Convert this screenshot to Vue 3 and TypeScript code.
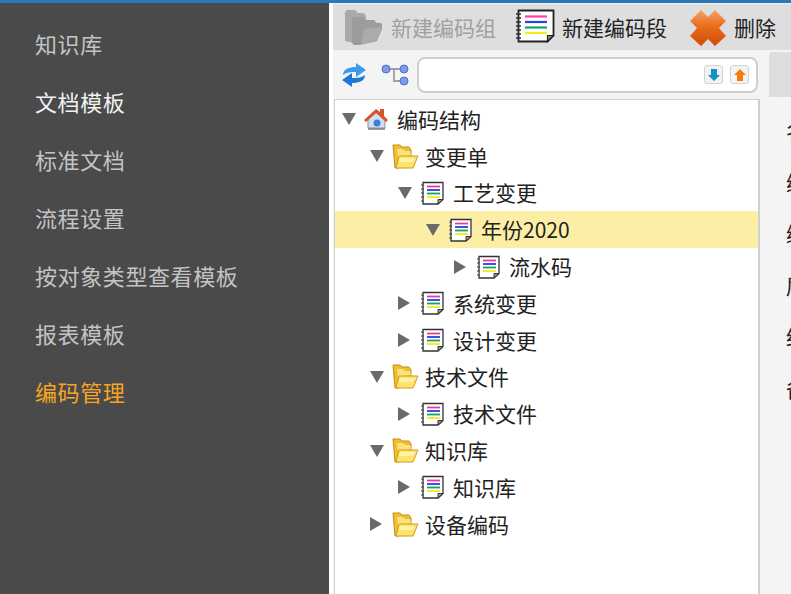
<script setup lang="ts">
interface NavItem { label: string; state: string }
interface TreeRow { label: string; level: number; open: boolean; icon: string; selected?: boolean }

const navItems: NavItem[] = [
  { label: '知识库', state: '' },
  { label: '文档模板', state: 'bright' },
  { label: '标准文档', state: '' },
  { label: '流程设置', state: '' },
  { label: '按对象类型查看模板', state: '' },
  { label: '报表模板', state: '' },
  { label: '编码管理', state: 'active' },
]

const rows: TreeRow[] = [
  { label: '编码结构', level: 0, open: true, icon: 'home' },
  { label: '变更单', level: 1, open: true, icon: 'folder' },
  { label: '工艺变更', level: 2, open: true, icon: 'note' },
  { label: '年份2020', level: 3, open: true, icon: 'note', selected: true },
  { label: '流水码', level: 4, open: false, icon: 'note' },
  { label: '系统变更', level: 2, open: false, icon: 'note' },
  { label: '设计变更', level: 2, open: false, icon: 'note' },
  { label: '技术文件', level: 1, open: true, icon: 'folder' },
  { label: '技术文件', level: 2, open: false, icon: 'note' },
  { label: '知识库', level: 1, open: true, icon: 'folder' },
  { label: '知识库', level: 2, open: false, icon: 'note' },
  { label: '设备编码', level: 1, open: false, icon: 'folder' },
]

const formLabels = ['名', '编', '编', '层', '结', '备']
</script>

<template>
  <div class="app">
    <div class="topline"></div>
    <div class="body">
      <nav class="side">
        <div v-for="n in navItems" :key="n.label" class="nav" :class="n.state">{{ n.label }}</div>
      </nav>
      <main class="main">
        <div class="toolbar">
          <div class="tool disabled g1">
            <svg width="40" height="38" viewBox="0 0 40 38">
              <path d="M1 3l2-2h8l3 3h6l2 3v23l-13 4-8-2z" fill="#a9a9a9" />
              <path d="M8 10l2-2h9l3 3h8l3 3h4l1 1v5l-5 12-17 4-6 0-2-2z" fill="#9c9c9c" />
              <path d="M20 20l18-2-5 13-16 4z" fill="#ababab" />
            </svg>
            <span>新建编码组</span>
          </div>
          <div class="tool g2">
            <svg class="big-note" width="40" height="36" viewBox="0 0 40 36">
              <path d="M3.500 2.500h35v25l-6 6h-29z" fill="#fff" stroke="#222" stroke-width="1.800" />
              <path d="M32.500 33.500v-6h6z" fill="#888" stroke="#222" stroke-width="1.200" />
              <path d="M1 6h5M1 10h5M1 14h5M1 18h5M1 22h5M1 26h5M1 30h5" stroke="#333" stroke-width="1.500" />
              <path d="M10 8.500h22" stroke="#ff3fa6" stroke-width="2.200" />
              <path d="M10 14h22" stroke="#2b3df0" stroke-width="2.200" />
              <path d="M10 19.500h22" stroke="#12a75a" stroke-width="2.200" />
              <path d="M10 25h22" stroke="#f7ec1e" stroke-width="2.200" />
            </svg>
            <span>新建编码段</span>
          </div>
          <div class="tool g3">
            <svg width="38" height="38" viewBox="0 0 38 38">
              <defs>
                <linearGradient id="xfill" x1="0" y1="0" x2="0" y2="1">
                  <stop offset="0" stop-color="#f4a468" />
                  <stop offset="0.45" stop-color="#e86c1c" />
                  <stop offset="1" stop-color="#cf4c06" />
                </linearGradient>
              </defs>
              <path d="M12 1l7 7 7-7 11 11-7 7 7 8-11 10-7-7-7 7L1 27l7-8-7-7z" fill="url(#xfill)" />
            </svg>
            <span>删除</span>
          </div>
        </div>
        <div class="work">
          <section class="left">
            <div class="search">
              <svg class="ic-refresh" width="26" height="28" viewBox="0 0 26 28">
                <path d="M2 14C2 8 8 6 15 6V2l10 7-10 7v-5C10 11 6 11 2 14z" fill="#3a9bf0" />
                <path d="M24 14c0 6-6 8-13 8v4L1 19l10-7v5c5 0 9 0 13-3z" fill="#1f78d8" />
              </svg>
              <svg class="ic-nodes" width="28" height="26" viewBox="0 0 28 26">
                <path d="M5 7h17M13 7v12h9" fill="none" stroke="#a0a0a0" stroke-width="1.800" />
                <circle cx="5" cy="7" r="4" fill="#7d9be6" stroke="#4f70cc" />
                <circle cx="23" cy="7" r="4" fill="#7d9be6" stroke="#4f70cc" />
                <circle cx="23" cy="19" r="4" fill="#7d9be6" stroke="#4f70cc" />
              </svg>
              <div class="input">
                <span class="mini">
                  <svg width="14" height="14" viewBox="0 0 14 14"><path d="M4 1h6v6h3l-6 6-6-6h3z" fill="#0d94c8" /></svg>
                </span>
                <span class="mini">
                  <svg width="14" height="14" viewBox="0 0 14 14"><path d="M7 1l6 6h-3v6H4V7H1z" fill="#f97a0c" /></svg>
                </span>
              </div>
            </div>
            <div class="tree">
              <div v-for="(r, i) in rows" :key="i" class="row" :class="{ selected: r.selected }">
                <span class="indent" :class="'lv' + r.level"></span>
                <span class="arrow" :class="r.open ? 'is-open' : 'is-closed'"></span>
                <svg v-if="r.icon === 'home'" class="ico" width="26" height="26" viewBox="0 0 26 26">
                  <path d="M5 13v9h17v-9l-8-7z" fill="#cfe0ee" stroke="#7f93a8" />
                  <path d="M1 14L13 3l4 3V3h4v7l4 4-2 2L13 7 3 16z" fill="#d9532c" />
                  <circle cx="14" cy="17" r="3.500" fill="#3f7fd0" />
                  <path d="M5 23h17" stroke="#777" stroke-width="1.500" />
                </svg>
                <svg v-else-if="r.icon === 'folder'" class="ico" width="28" height="27" viewBox="0 0 28 27">
                  <path d="M2 2h7l2 2h7l2 3v9l-12 9H4z" fill="#f2bd2e" stroke="#c48d16" />
                  <path d="M6 6h6l2 2h5l1 4-13 2z" fill="#fbe27a" />
                  <path d="M8 13h19l-5 12H5z" fill="#fde36c" stroke="#d39c1c" />
                  <path d="M9 15h15l-2 4H8z" fill="#fff2a8" />
                </svg>
                <svg v-else class="ico" width="26" height="26" viewBox="0 0 26 26">
                  <path d="M4 2.500h20v17l-5 4.500H4z" fill="#fff" stroke="#333" stroke-width="1.300" />
                  <path d="M19 24v-4.500h5z" fill="#999" stroke="#333" />
                  <path d="M2 5h3M2 9h3M2 13h3M2 17h3M2 21h3" stroke="#444" />
                  <path d="M8 6.500h13" stroke="#f0359e" stroke-width="1.800" />
                  <path d="M8 10h13" stroke="#2a3be6" stroke-width="1.800" />
                  <path d="M8 13.500h13" stroke="#14a45c" stroke-width="1.800" />
                  <path d="M8 17h13" stroke="#f5e81c" stroke-width="1.800" />
                </svg>
                <span class="txt" :class="{ wide: r.icon !== 'folder' }">{{ r.label }}</span>
              </div>
            </div>
          </section>
          <aside class="pane">
            <div class="tab"></div>
            <div class="form">
              <div v-for="(f, i) in formLabels" :key="i" class="flabel">{{ f }}</div>
            </div>
          </aside>
        </div>
      </main>
    </div>
  </div>
</template>

<style>
html, body { margin: 0; padding: 0; background: #fff; overflow: hidden; }
</style>

<style scoped>
.app {
  width: 791px;
  height: 594px;
  overflow: hidden;
  display: flex;
  flex-direction: column;
  font-family: "Noto Sans CJK SC", "Liberation Sans", sans-serif;
  font-size: 21px;
  color: #222;
  background: #fff;
}
.topline { height: 3px; background: #2b78b4; flex: none; }
.body { flex: 1; display: flex; min-height: 0; }
.side {
  width: 329px;
  flex: none;
  background: #4a4a4a;
  padding: 11px 0 0 35px;
  box-sizing: border-box;
}
.nav {
  height: 58px;
  line-height: 58px;
  color: #c4c4c4;
  font-size: 22px;
  letter-spacing: 0.6px;
  white-space: nowrap;
}
.nav.bright { color: #f2f2f2; }
.nav.active { color: #f5a623; }
.main {
  margin-left: 4px;
  flex: 1;
  min-width: 0;
  display: flex;
  flex-direction: column;
}
.toolbar {
  height: 47px;
  flex: none;
  box-sizing: border-box;
  border-top: 1px solid #efefef;
  padding: 1px 0 0 11px;
  background: #dedede;
  display: flex;
  align-items: center;
  white-space: nowrap;
}
.tool { display: flex; align-items: center; }
.tool span { line-height: 1; }
.disabled { color: #a0a0a0; }
.g1 { gap: 7px; }
.g2 { margin-left: 19px; gap: 7px; }
.big-note { margin-top: -3px; }
.g3 { margin-left: 22px; gap: 7px; }
.work { flex: 1; display: flex; min-height: 0; background: #f4f4f4; }
.left { width: 427px; flex: none; display: flex; flex-direction: column; }
.search {
  height: 49px;
  flex: none;
  display: flex;
  align-items: center;
  padding: 0 2px 0 8px;
  box-sizing: border-box;
}
.ic-nodes { margin-left: 14px; }
.input {
  margin-left: 8px;
  flex: 1;
  height: 36px;
  box-sizing: border-box;
  background: #fff;
  border: 2px solid #cfcfcf;
  border-radius: 8px;
  display: flex;
  align-items: center;
  justify-content: flex-end;
  gap: 7px;
  padding-right: 7px;
}
.mini {
  width: 19px;
  height: 19px;
  box-sizing: border-box;
  border: 1px solid #d4d4d4;
  border-radius: 3px;
  background: #f3f3f3;
  display: flex;
  align-items: center;
  justify-content: center;
}
.tree {
  flex: 1;
  margin-left: 1px;
  background: #fff;
  border: 1px solid #cfcfcf;
  border-right-width: 2px;
  border-bottom: 0;
  box-sizing: border-box;
  padding-top: 1px;
}
.row {
  height: 36.800px;
  display: flex;
  align-items: center;
  padding-left: 7px;
  white-space: nowrap;
}
.row.selected { background: #fdeea6; }
.indent { flex: none; display: block; }
.lv0 { width: 0; }
.lv1 { width: 28px; }
.lv2 { width: 56px; }
.lv3 { width: 84px; }
.lv4 { width: 112px; }
.arrow { flex: none; width: 14px; height: 14px; box-sizing: border-box; }
.arrow.is-open {
  border-left: 7px solid transparent;
  border-right: 7px solid transparent;
  border-top: 12px solid #6a6a6a;
  height: 12px;
}
.arrow.is-closed {
  border-top: 7px solid transparent;
  border-bottom: 7px solid transparent;
  border-left: 12px solid #6a6a6a;
}
.ico { flex: none; margin-left: 7px; }
.txt { margin-left: 6px; line-height: 1; }
.txt.wide { margin-left: 8px; }
.pane { flex: 1; min-width: 0; overflow: hidden; }
.tab { height: 45px; margin: 2px 0 0 9px; background: #dedede; border-top-left-radius: 4px; }
.form { padding: 8px 0 0 26px; }
.flabel { height: 51.500px; line-height: 51.500px; white-space: nowrap; }
</style>
